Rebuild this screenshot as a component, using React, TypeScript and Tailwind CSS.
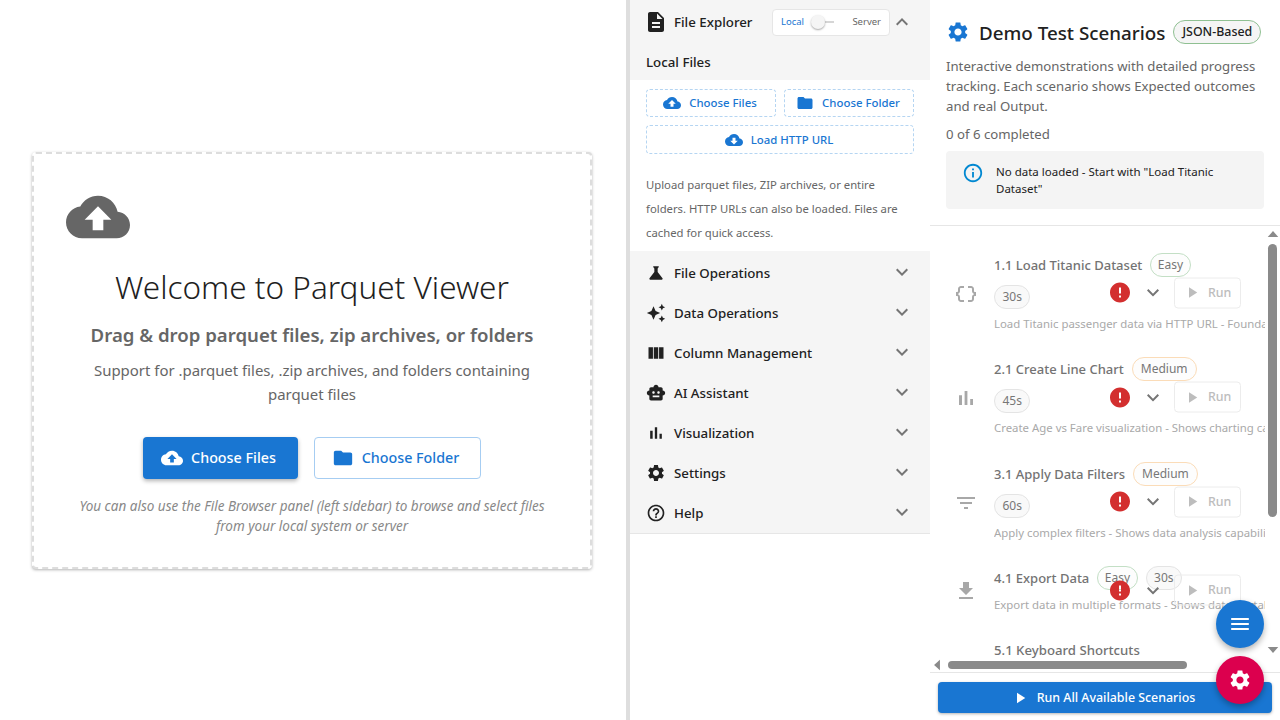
import React from "react";

const P = {
  cloudUp: "M19.35 10.04C18.67 6.59 15.64 4 12 4 9.11 4 6.6 5.64 5.35 8.04 2.34 8.36 0 10.91 0 14c0 3.31 2.69 6 6 6h13c2.76 0 5-2.24 5-5 0-2.64-2.05-4.78-4.65-4.96zM14 13v4h-4v-4H7l5-5 5 5h-3z",
  cloudDown: "M19.35 10.04C18.67 6.59 15.64 4 12 4 9.11 4 6.6 5.64 5.35 8.04 2.34 8.36 0 10.91 0 14c0 3.31 2.69 6 6 6h13c2.76 0 5-2.24 5-5 0-2.64-2.05-4.78-4.65-4.96zM17 13l-5 5-5-5h3V9h4v4h3z",
  folder: "M10 4H4c-1.1 0-1.99.9-1.99 2L2 18c0 1.1.9 2 2 2h16c1.1 0 2-.9 2-2V8c0-1.1-.9-2-2-2h-8l-2-2z",
  doc: "M14 2H6c-1.1 0-1.99.9-1.99 2L4 20c0 1.1.89 2 1.99 2H18c1.1 0 2-.9 2-2V8l-6-6zm2 16H8v-2h8v2zm0-4H8v-2h8v2zm-3-5V3.5L18.5 9H13z",
  more: "M16.59 8.59 12 13.17 7.41 8.59 6 10l6 6 6-6z",
  less: "M12 8l-6 6 1.41 1.41L12 10.83l4.59 4.58L18 14z",
  science: "M19.8 18.4 14 10.67V6.5l1.35-1.69c.26-.33.03-.81-.39-.81H9.04c-.42 0-.65.48-.39.81L10 6.5v4.17L4.2 18.4c-.49.66-.02 1.6.8 1.6h14c.82 0 1.29-.94.8-1.6z",
  sparkle: "m19 9 1.25-2.75L23 5l-2.75-1.25L19 1l-1.25 2.75L15 5l2.75 1.25L19 9zm-7.5.5L9 4 6.5 9.5 1 12l5.5 2.5L9 20l2.5-5.5L17 12l-5.5-2.5zM19 15l-1.25 2.75L15 19l2.75 1.25L19 23l1.25-2.75L23 19l-2.75-1.25L19 15z",
  columns: "M14.67 5v14H9.33V5h5.34zm1 14H21V5h-5.33v14zm-7.34 0V5H3v14h5.33z",
  robot: "M20 9V7c0-1.1-.9-2-2-2h-3c0-1.66-1.34-3-3-3S9 3.34 9 5H6c-1.1 0-2 .9-2 2v2c-1.66 0-3 1.34-3 3s1.34 3 3 3v4c0 1.1.9 2 2 2h12c1.1 0 2-.9 2-2v-4c1.66 0 3-1.34 3-3s-1.34-3-3-3zM7.5 11.5c0-.83.67-1.5 1.5-1.5s1.5.67 1.5 1.5S9.83 13 9 13s-1.5-.67-1.5-1.5zM16 17H8v-2h8v2zm-1-4c-.83 0-1.5-.67-1.5-1.5S14.17 10 15 10s1.5.67 1.5 1.5S15.83 13 15 13z",
  bars: "M5 9.2h3V19H5zM10.6 5h2.8v14h-2.8zm5.6 8H19v6h-2.8z",
  gear: "M19.14 12.94c.04-.3.06-.61.06-.94 0-.32-.02-.64-.07-.94l2.03-1.58c.18-.14.23-.41.12-.61l-1.92-3.32c-.12-.22-.37-.29-.59-.22l-2.39.96c-.5-.38-1.03-.7-1.62-.94l-.36-2.54c-.04-.24-.24-.41-.48-.41h-3.84c-.24 0-.43.17-.47.41l-.36 2.54c-.59.24-1.13.57-1.62.94l-2.39-.96c-.22-.08-.47 0-.59.22L2.74 8.87c-.12.21-.08.47.12.61l2.03 1.58c-.05.3-.09.63-.09.94s.02.64.07.94l-2.03 1.58c-.18.14-.23.41-.12.61l1.92 3.32c.12.22.37.29.59.22l2.39-.96c.5.38 1.03.7 1.62.94l.36 2.54c.05.24.24.41.48.41h3.84c.24 0 .44-.17.47-.41l.36-2.54c.59-.24 1.13-.56 1.62-.94l2.39.96c.22.08.47 0 .59-.22l1.92-3.32c.12-.22.07-.47-.12-.61l-2.01-1.58zM12 15.6c-1.98 0-3.6-1.62-3.6-3.6s1.62-3.6 3.6-3.6 3.6 1.62 3.6 3.6-1.62 3.6-3.6 3.6z",
  help: "M11 18h2v-2h-2v2zm1-16C6.48 2 2 6.48 2 12s4.48 10 10 10 10-4.48 10-10S17.52 2 12 2zm0 18c-4.41 0-8-3.59-8-8s3.59-8 8-8 8 3.59 8 8-3.59 8-8 8zm0-14c-2.21 0-4 1.79-4 4h2c0-1.1.9-2 2-2s2 .9 2 2c0 2-3 1.75-3 5h2c0-2.25 3-2.5 3-5 0-2.21-1.79-4-4-4z",
  info: "M11 7h2v2h-2zm0 4h2v6h-2zm1-9C6.48 2 2 6.48 2 12s4.48 10 10 10 10-4.48 10-10S17.52 2 12 2zm0 18c-4.41 0-8-3.59-8-8s3.59-8 8-8 8 3.59 8 8-3.59 8-8 8z",
  braces: "M4 7v2c0 .55-.45 1-1 1H2v4h1c.55 0 1 .45 1 1v2c0 1.65 1.35 3 3 3h3v-2H7c-.55 0-1-.45-1-1v-2c0-1.3-.84-2.42-2-2.83v-.34C5.16 11.42 6 10.3 6 9V7c0-.55.45-1 1-1h3V4H7C5.35 4 4 5.35 4 7zm17 3c-.55 0-1-.45-1-1V7c0-1.65-1.35-3-3-3h-3v2h3c.55 0 1 .45 1 1v2c0 1.3.84 2.42 2 2.83v.34c-1.16.41-2 1.52-2 2.83v2c0 .55-.45 1-1 1h-3v2h3c1.65 0 3-1.35 3-3v-2c0-.55.45-1 1-1h1v-4h-1z",
  filter: "M10 18h4v-2h-4v2zM3 6v2h18V6H3zm3 7h12v-2H6v2z",
  download: "M19 9h-4V3H9v6H5l7 7 7-7zM5 18v2h14v-2H5z",
  play: "M8 5v14l11-7z",
  error: "M12 2C6.48 2 2 6.48 2 12s4.48 10 10 10 10-4.48 10-10S17.52 2 12 2zm1 15h-2v-2h2v2zm0-4h-2V7h2v6z",
  menu: "M4 18h16c.55 0 1-.45 1-1s-.45-1-1-1H4c-.55 0-1 .45-1 1s.45 1 1 1zm0-5h16c.55 0 1-.45 1-1s-.45-1-1-1H4c-.55 0-1 .45-1 1s.45 1 1 1zM3 7c0 .55.45 1 1 1h16c.55 0 1-.45 1-1s-.45-1-1-1H4c-.55 0-1 .45-1 1z",
};

const Icon = ({ d, className }: { d: string; className?: string }) => (
  <svg viewBox="0 0 24 24" fill="currentColor" className={className} aria-hidden="true">
    <path d={d} />
  </svg>
);

const navItems = [
  { label: "File Operations", icon: P.science },
  { label: "Data Operations", icon: P.sparkle },
  { label: "Column Management", icon: P.columns },
  { label: "AI Assistant", icon: P.robot },
  { label: "Visualization", icon: P.bars },
  { label: "Settings", icon: P.gear },
  { label: "Help", icon: P.help },
];

const scenarios = [
  { title: "1.1 Load Titanic Dataset", level: "Easy", time: "30s", icon: P.braces, desc: "Load Titanic passenger data via HTTP URL - Foundation" },
  { title: "2.1 Create Line Chart", level: "Medium", time: "45s", icon: P.bars, desc: "Create Age vs Fare visualization - Shows charting capabilities" },
  { title: "3.1 Apply Data Filters", level: "Medium", time: "60s", icon: P.filter, desc: "Apply complex filters - Shows data analysis capabilities" },
  { title: "4.1 Export Data", level: "Easy", time: "30s", icon: P.download, desc: "Export data in multiple formats - Shows data portability" },
];

const Chip = ({ label, level }: { label: string; level?: string }) => (
  <span
    className={`h-6 rounded-full border flex items-center text-[12px] text-[#777] ${
      level === "Easy"
        ? "px-[6.5px] border-[#c3dfc5] bg-[#fdfdfd]"
        : level === "Medium"
          ? "px-2 border-[#fbdcb8] bg-[#fdfdfd]"
          : "px-[7.5px] border-[#e4e4e4] bg-[#f9f9f9]"
    }`}
  >
    {label}
  </span>
);

const ScenarioRow = ({ s }: { s: (typeof scenarios)[number] }) => (
  <div className="relative flex pt-3 pb-[10.5px] pl-4">
    <div className="w-12 flex items-center pl-[8px]">
      <Icon d={s.icon} className="w-6 h-6 text-[#a8a8a8]" />
    </div>
    <div className="min-w-0 w-[271px]">
      <div className="flex flex-wrap items-center gap-2 w-[216px]">
        <span className="text-[13px] leading-6 font-medium text-[#737373] whitespace-nowrap">{s.title}</span>
        <Chip label={s.level} level={s.level} />
        <Chip label={s.time} />
      </div>
      <div className="pt-1 text-[11.4px] leading-[22px] text-[#a9a9a9] whitespace-nowrap overflow-hidden">{s.desc}</div>
    </div>
    <div className="absolute left-[178px] top-1/2 -translate-y-1/2 flex items-center">
      <Icon d={P.error} className="w-6 h-6 text-[#d32f2f]" />
      <Icon d={P.more} className="w-6 h-6 ml-[9px] text-[#757575]" />
      <span className="ml-[9px] w-[67px] h-[31px] rounded border border-[#ececec] flex items-center pl-[8px] gap-[7px] text-[12.4px] font-medium text-[#bdbdbd]">
        <Icon d={P.play} className="w-[18px] h-[18px]" />
        Run
      </span>
    </div>
  </div>
);

const OutlineBtn = ({ icon, label, className }: { icon: string; label: string; className?: string }) => (
  <button className={`rounded border border-dashed border-[#b5d5f2] bg-white flex items-center justify-center gap-2 pr-[2px] text-[11.4px] font-medium text-[#1976d2] ${className ?? ""}`}>
    <Icon d={icon} className="w-[18px] h-[18px]" />
    {label}
  </button>
);

export default function App() {
  return (
    <div className="h-screen w-full flex overflow-hidden bg-white font-['Noto_Sans',sans-serif]">
      {/* drop zone */}
      <main className="w-[626px] shrink-0 flex items-center pl-8">
        <div className="w-[560px] h-[417px] mb-[-1px] border-2 border-dashed border-[#dddddd] rounded shadow-[0_1px_3px_rgba(0,0,0,0.3)] bg-white p-8 flex flex-col items-center text-center">
          <Icon d={P.cloudUp} className="w-16 h-16 shrink-0 -mt-[1px] self-start text-[#666666]" />
          <h1 className="mt-[15px] text-[31.5px] leading-[46px] font-light text-[#1f1f1f]">Welcome to Parquet Viewer</h1>
          <h2 className="mt-[11px] text-[18.6px] leading-7 font-semibold text-[#666666] whitespace-nowrap">Drag &amp; drop parquet files, zip archives, or folders</h2>
          <p className="mt-[9px] w-[470px] text-[14.95px] leading-6 text-[#666666]">Support for .parquet files, .zip archives, and folders containing parquet files</p>
          <div className="mt-[31px] flex gap-4">
            <button className="w-[155px] h-[42px] rounded bg-[#1976d2] shadow-[0_2px_4px_rgba(0,0,0,0.3)] pr-1 text-white text-[14.3px] font-medium flex items-center justify-center gap-2">
              <Icon d={P.cloudUp} className="w-[22px] h-[22px]" />
              Choose Files
            </button>
            <button className="w-[167px] h-[42px] rounded border border-[#a6cdf2] pr-1 text-[#1976d2] text-[14.3px] font-medium flex items-center justify-center gap-2">
              <Icon d={P.folder} className="w-[22px] h-[22px]" />
              Choose Folder
            </button>
          </div>
          <p className="mt-[17px] w-[490px] text-[13.5px] leading-5 italic text-[#888888]">You can also use the File Browser panel (left sidebar) to browse and select files from your local system or server</p>
        </div>
      </main>
      <div className="w-1 shrink-0 bg-[#dedede]" />

      {/* sidebar */}
      <aside className="w-[300px] shrink-0 flex flex-col">
        <div className="bg-[#f5f5f5] h-[80px] px-4 shrink-0">
          <div className="h-11 flex items-center">
            <Icon d={P.doc} className="w-6 h-6 -ml-[2px] text-[#212121]" />
            <span className="ml-[6px] pt-px text-[13.3px] font-medium text-[#212121]">File Explorer</span>
            <div className="ml-auto h-[27px] w-[118px] bg-white border border-[#e6e6e6] rounded flex items-center px-[8px] text-[9.5px]">
              <span className="text-[#1976d2]">Local</span>
              <span className="relative ml-[10px] w-[20px] h-[2px] bg-[#d6d6d6]">
                <span className="absolute -left-[3px] -top-[6px] w-[14px] h-[14px] rounded-full bg-[#f5f5f5] shadow-[0_1px_2px_rgba(0,0,0,0.35)]" />
              </span>
              <span className="ml-auto text-[#666666]">Server</span>
            </div>
            <Icon d={P.less} className="w-6 h-6 text-[#757575]" />
          </div>
          <div className="mt-[8px] text-[13.3px] leading-5 font-medium text-[#212121]">Local Files</div>
        </div>
        <div className="h-[171px] shrink-0 px-4 pt-[9px]">
          <div className="flex gap-2">
            <OutlineBtn icon={P.cloudUp} label="Choose Files" className="w-[130px] h-[28px]" />
            <OutlineBtn icon={P.folder} label="Choose Folder" className="w-[130px] h-[28px]" />
          </div>
          <OutlineBtn icon={P.cloudDown} label="Load HTTP URL" className="mt-2 w-[268px] h-[29px]" />
          <p className="mt-[19px] text-[11.3px] leading-6 text-[#666666]">Upload parquet files, ZIP archives, or entire folders. HTTP URLs can also be loaded. Files are cached for quick access.</p>
        </div>
        <nav className="bg-[#f5f5f5] border-b border-[#e6e6e6] pt-[2px]">
          {navItems.map((item) => (
            <div key={item.label} className="h-10 px-4 flex items-center">
              <Icon d={item.icon} className="w-5 h-5 text-[#212121]" />
              <span className="ml-2 pt-px text-[13.3px] font-medium text-[#212121]">{item.label}</span>
              <Icon d={P.more} className="w-6 h-6 ml-auto -mt-[2px] text-[#757575]" />
            </div>
          ))}
        </nav>
      </aside>

      {/* demo scenarios */}
      <section className="w-[350px] shrink-0 flex flex-col relative">
        <header className="h-[226px] shrink-0 border-b border-[#e6e6e6] px-4 pt-5">
          <div className="flex items-center h-6">
            <Icon d={P.gear} className="w-6 h-6 text-[#1976d2]" />
            <h3 className="ml-[9px] pt-[2px] text-[18.8px] font-medium text-[#212121] whitespace-nowrap">Demo Test Scenarios</h3>
            <span className="ml-2 h-6 w-[88px] shrink-0 rounded-full border border-[#8fc092] bg-[#f5f5f5] flex items-center justify-center text-[12.4px] font-medium text-[#212121]">JSON-Based</span>
          </div>
          <p className="mt-3 text-[13.2px] leading-5 text-[#666666]">Interactive demonstrations with detailed progress tracking. Each scenario shows Expected outcomes and real Output.</p>
          <p className="mt-[8px] text-[13.2px] leading-5 text-[#666666]">0 of 6 completed</p>
          <div className="mt-[7px] w-[318px] h-[58px] rounded bg-[#f4f4f4] flex pl-4 pt-[12px]">
            <Icon d={P.info} className="w-[22px] h-[22px] text-[#0288d1] -mt-[1px]" />
            <p className="ml-[12px] w-[240px] text-[11.5px] leading-[17px] text-[#212121]">No data loaded - Start with "Load Titanic Dataset"</p>
          </div>
        </header>
        <div className="relative flex-1 min-h-0 overflow-hidden pt-[14.5px]">
          {scenarios.map((s) => (
            <ScenarioRow key={s.title} s={s} />
          ))}
          <div className="flex pl-[64px] pt-[11px]">
            <span className="text-[13.2px] leading-6 font-medium text-[#737373]">5.1 Keyboard Shortcuts</span>
          </div>
          {/* scrollbars */}
          <div className="absolute right-0 top-0 bottom-0 w-[15px] bg-white">
            <Icon d="M12 7l9 10H3z" className="absolute left-[0.5px] top-px w-[14px] h-[14px] text-[#8a8a8a]" />
            <div className="absolute left-[3px] top-[18px] w-[9px] h-[273px] rounded-full bg-[#8a8a8a]" />
            <Icon d="M12 17l9-10H3z" className="absolute left-[0.5px] bottom-[15px] w-[14px] h-[14px] text-[#8a8a8a]" />
          </div>
          <div className="absolute left-0 right-[15px] bottom-0 h-[14px] bg-white">
            <Icon d="M7 12l10-9v18z" className="absolute left-0 top-0 w-[14px] h-[14px] text-[#8a8a8a]" />
            <div className="absolute left-[18px] top-[3px] w-[239px] h-2 rounded-full bg-[#8a8a8a]" />
          </div>
        </div>
        <footer className="h-[48px] shrink-0 border-t border-[#e6e6e6] px-2 pt-[9px]">
          <button className="w-[334px] h-[31px] rounded bg-[#1976d2] shadow-[0_1px_3px_rgba(0,0,0,0.3)] pr-1 text-white text-[12.4px] font-medium flex items-center justify-center gap-2">
            <Icon d={P.play} className="w-[18px] h-[18px]" />
            <span className="pt-px">Run All Available Scenarios</span>
          </button>
        </footer>
        <div className="absolute right-4 bottom-[72px] w-12 h-12 rounded-full bg-[#1976d2] shadow-[0_3px_6px_rgba(0,0,0,0.3)] flex items-center justify-center text-white">
          <Icon d={P.menu} className="w-6 h-6" />
        </div>
        <div className="absolute right-4 bottom-[16px] w-12 h-12 rounded-full bg-[#dc004e] shadow-[0_3px_6px_rgba(0,0,0,0.3)] flex items-center justify-center text-white">
          <Icon d={P.gear} className="w-6 h-6" />
        </div>
      </section>
    </div>
  );
}
